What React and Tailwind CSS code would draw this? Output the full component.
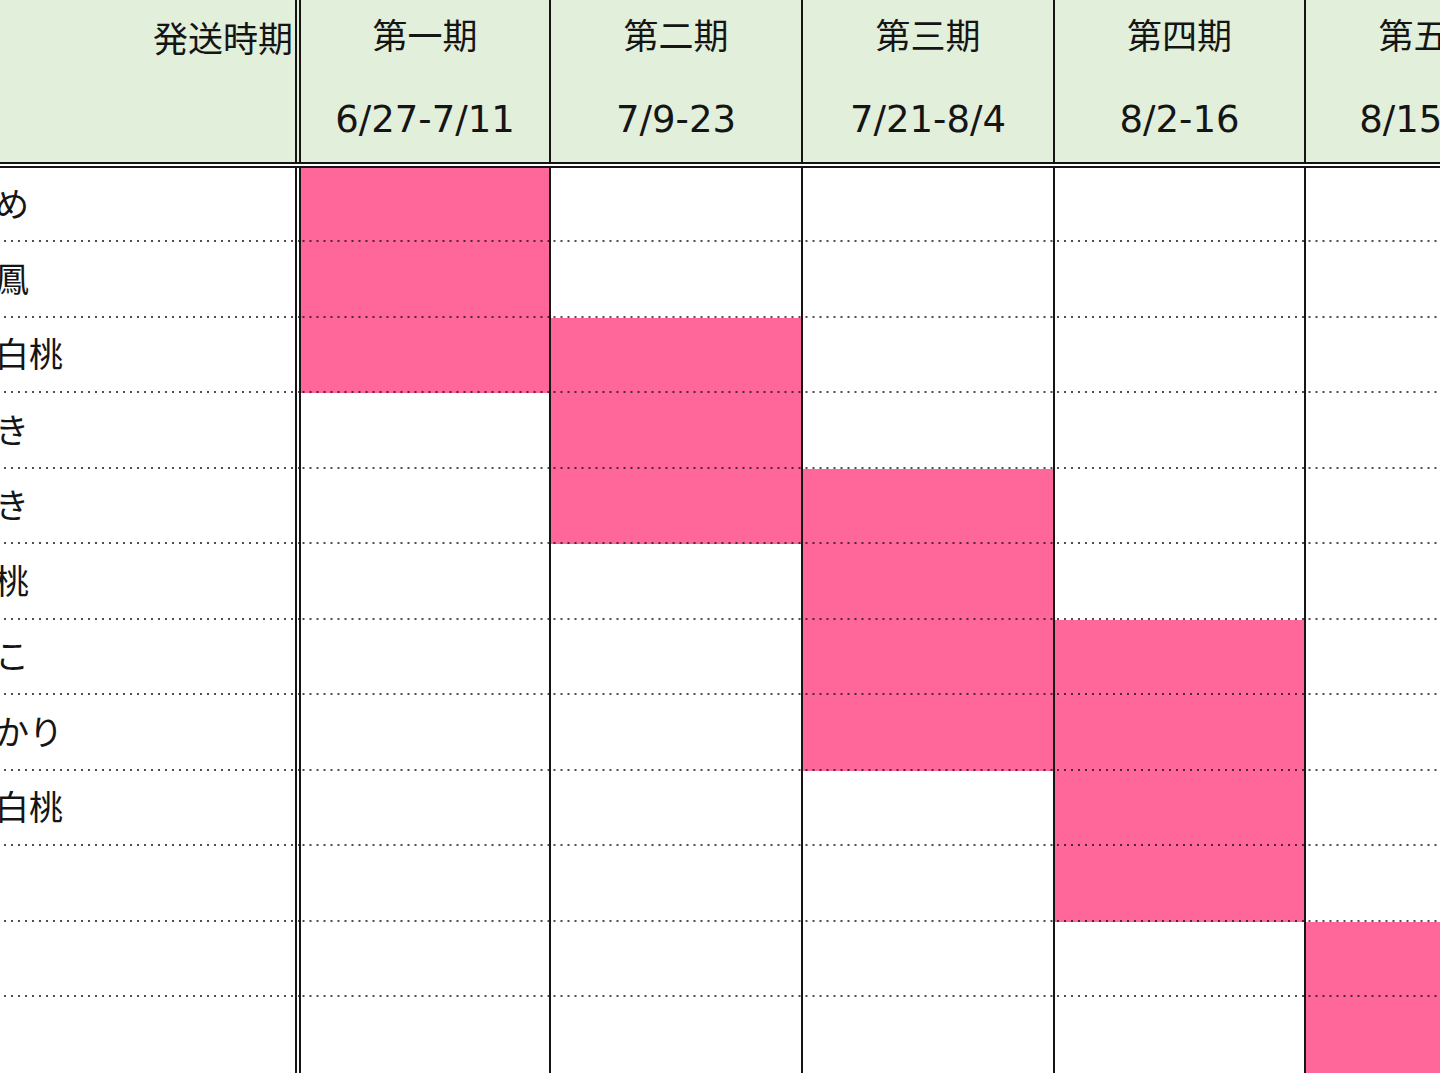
const periods = [
  { name: '第一期', date: '6/27-7/11' },
  { name: '第二期', date: '7/9-23' },
  { name: '第三期', date: '7/21-8/4' },
  { name: '第四期', date: '8/2-16' },
  { name: '第五期', date: '8/15-29' },
]

// which rows are shipping in each period (inclusive)
const spans = [
  [0, 2],
  [2, 4],
  [4, 7],
  [6, 9],
  [10, 11],
]

const varieties = [
  'ちよひめ',
  '日川白鳳',
  '加納岩白桃',
  'あかつき',
  '夢みずき',
  '浅間白桃',
  'なつっこ',
  'ゆうあかり',
  '川中島白桃',
  '',
  '',
  '',
]

const cjk = "font-['Noto_Sans_CJK_JP',sans-serif]"
const num = "font-['DejaVu_Sans','Noto_Sans_CJK_JP',sans-serif]"
const dotted =
  'bg-[linear-gradient(to_right,rgba(20,20,20,0.75)_2px,transparent_2px)] bg-[length:7px_2px] bg-repeat-x bg-bottom'

export default function App() {
  return (
    <div className="w-[1440px] h-[1080px] overflow-hidden bg-white text-[#151515]">
      <div className="grid grid-cols-[301px_250px_252px_252px_251px_252px] w-[1558px]">
        {/* header */}
        <div className="h-[162px] bg-[#e2efda] border-r-[6px] border-double border-[#151515] flex justify-end">
          <div className={`h-[73px] flex items-center pr-[2px] text-[35px] leading-none ${cjk}`}>発送時期</div>
        </div>
        {periods.map((p) => (
          <div key={p.name} className="h-[162px] bg-[#e2efda] border-r-2 border-[#151515] flex flex-col">
            <div className={`h-[66px] flex items-center justify-center text-[35px] leading-none ${cjk}`}>{p.name}</div>
            <div className={`h-[96px] pt-[10px] flex items-center justify-center text-[37px] leading-none ${num}`}>{p.date}</div>
          </div>
        ))}

        {/* double rule under header */}
        <div className="col-span-6 h-[6px] border-y-2 border-[#151515] bg-white" />

        {/* body */}
        {varieties.map((v, r) => {
          const h = r === 0 ? 'h-[74px]' : 'h-[75.5px]'
          const line = r === varieties.length - 1 ? '' : dotted
          return [
            <div
              key={'l' + r}
              className={`${h} ${line} border-r-[6px] border-double border-[#151515] overflow-hidden flex items-center pb-[4px]`}
            >
              <span className={`-ml-[107px] whitespace-nowrap text-[34px] leading-none ${cjk}`}>{v}</span>
            </div>,
            ...periods.map((p, c) => {
              const on = r >= spans[c][0] && r <= spans[c][1]
              return (
                <div
                  key={r + '-' + c}
                  className={`${h} ${line} border-r-2 border-[#151515] ${on ? 'bg-[#ff6699]' : 'bg-white'}`}
                />
              )
            }),
          ]
        })}
      </div>
    </div>
  )
}
